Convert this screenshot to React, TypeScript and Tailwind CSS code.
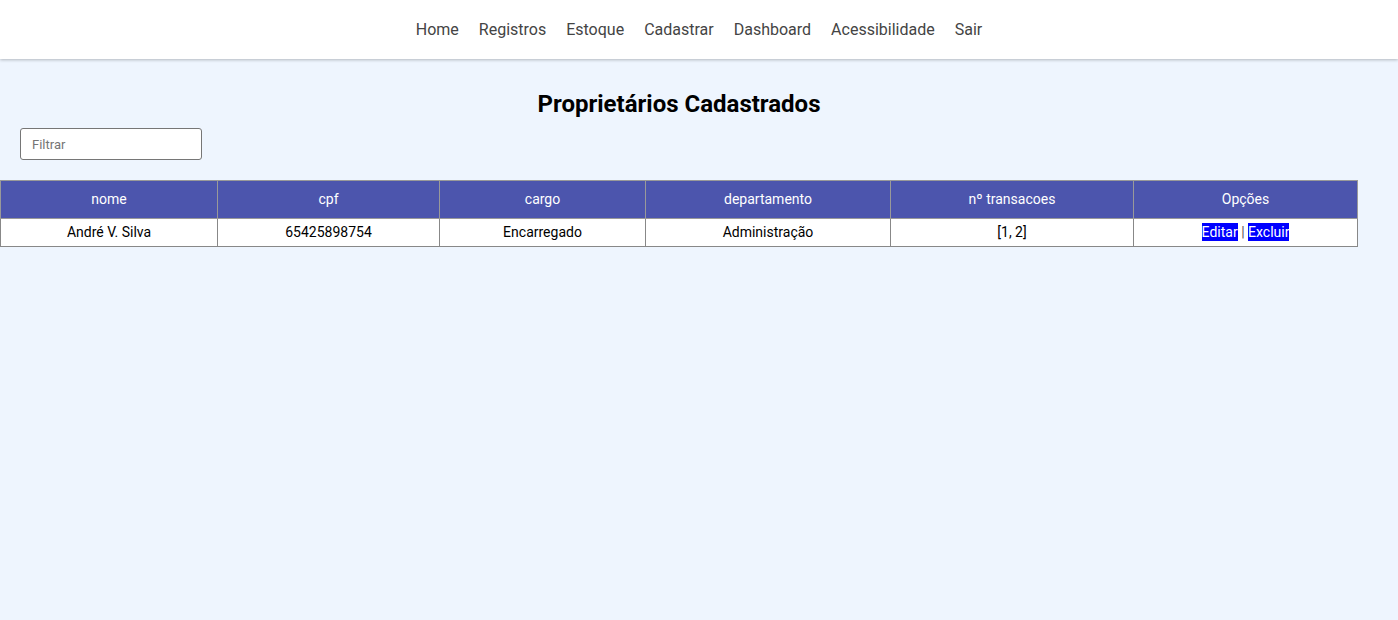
export default function App() {
  const cols = [
    { label: "nome", w: "w-[217px]" },
    { label: "cpf", w: "w-[222px]" },
    { label: "cargo", w: "w-[206px]" },
    { label: "departamento", w: "w-[245px]" },
    { label: "nº transacoes", w: "w-[243px]" },
    { label: "Opções", w: "w-[224px]" },
  ];

  return (
    <div className="min-h-[620px] bg-[#eef5fe] font-['Roboto',sans-serif]">
      {/* Navbar */}
      <nav className="h-[59px] bg-white shadow-[0_1px_3px_rgba(0,0,0,0.25)] flex items-center justify-center gap-5 text-[16px] text-[#444]">
        {["Home", "Registros", "Estoque", "Cadastrar", "Dashboard", "Acessibilidade", "Sair"].map((n) => (
          <a key={n} href="#" className="leading-none">{n}</a>
        ))}
      </nav>

      <div className="w-[1358px]">
        <h1 className="text-center text-[24px] font-bold text-black mt-[30px] leading-[30px]">
          Proprietários Cadastrados
        </h1>

        <div className="px-5 mt-[9px]">
          <input
            placeholder="Filtrar"
            className="w-[182px] h-[32px] px-[11px] text-[13px] bg-white border border-[#767676] rounded-[3px] placeholder:text-[#757575] outline-none"
          />
        </div>

        <table className="mt-[20px] w-[1358px] border-collapse text-[14px] table-fixed">
          <thead>
            <tr className="bg-[#4c55ad] text-white">
              {cols.map((c) => (
                <th key={c.label} className={`${c.w} h-[38px] font-normal border border-[#999]`}>
                  {c.label}
                </th>
              ))}
            </tr>
          </thead>
          <tbody>
            <tr className="bg-white text-black text-center">
              <td className="h-[28px] border border-[#888]">André V. Silva</td>
              <td className="border border-[#888]">65425898754</td>
              <td className="border border-[#888]">Encarregado</td>
              <td className="border border-[#888]">Administração</td>
              <td className="border border-[#888]">[1, 2]</td>
              <td className="border border-[#888]">
                <span className="bg-[#0000ff] text-white py-[1px]">Editar</span>
                <span className="text-[#555]"> | </span>
                <span className="bg-[#0000ff] text-white py-[1px]">Excluir</span>
              </td>
            </tr>
          </tbody>
        </table>
      </div>
    </div>
  );
}
